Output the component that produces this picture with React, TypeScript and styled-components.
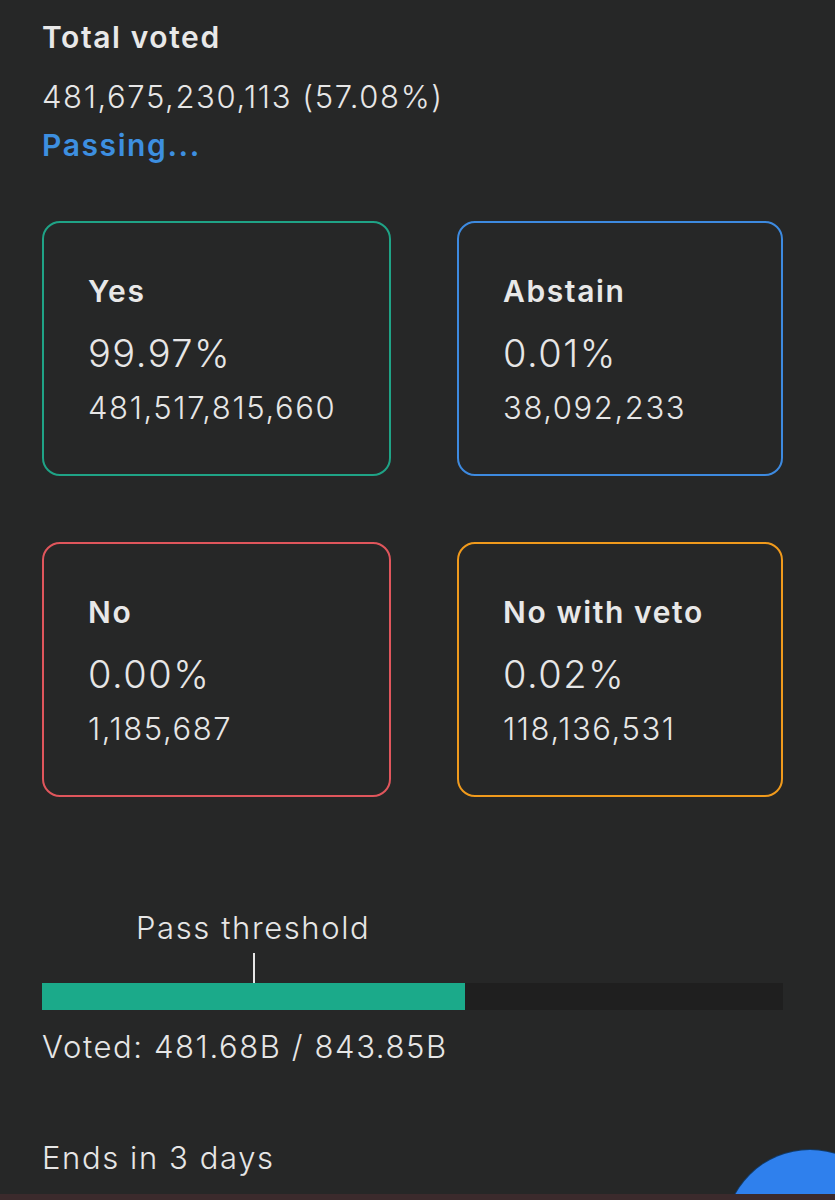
import styled, { createGlobalStyle } from 'styled-components';

const GlobalStyle = createGlobalStyle`
  body {
    margin: 0;
    background: #262727;
    font-family: Inter, Lato, sans-serif;
    color: #e6e6e6;
  }
`;

const Page = styled.div`
  position: relative;
  height: 1200px;
  overflow: hidden;
  display: flex;
  flex-direction: column;
`;

const Content = styled.div`
  flex: 1;
  padding: 19px 52px 0 42px;
`;

const Title = styled.div`
  font-size: 30px;
  font-weight: 600;
  line-height: 36px;
  letter-spacing: 1.6px;
  color: #e8e8e8;
`;

const Body = styled.div`
  font-size: 31px;
  font-weight: 300;
  line-height: 36px;
  letter-spacing: 1.6px;
`;

const Total = styled(Body)`
  margin-top: 24px;
`;

const Status = styled(Title)`
  margin-top: 12px;
  color: #3d8fe0;
`;

const Grid = styled.div`
  margin-top: 58px;
  display: grid;
  grid-template-columns: 349px 326px;
  column-gap: 66px;
  row-gap: 66px;
`;

const Card = styled.div<{ $color: string }>`
  height: 255px;
  box-sizing: border-box;
  border: 2.5px solid ${(p) => p.$color};
  border-radius: 18px;
  padding: 50px 10px 0 44px;
`;

const CardLabel = styled(Title)``;

const CardPercent = styled.div`
  margin-top: 22px;
  font-size: 38px;
  font-weight: 300;
  line-height: 44px;
  letter-spacing: 1.5px;
`;

const CardAmount = styled(Body)`
  margin-top: 15px;
`;

const Threshold = styled.div`
  margin-top: 113px;
`;

const ThresholdLabel = styled(Body)<{ $at: number }>`
  margin-left: ${(p) => p.$at}%;
  transform: translateX(-50%);
  width: max-content;
`;

const Tick = styled.div<{ $at: number }>`
  margin-left: ${(p) => p.$at}%;
  margin-top: 7px;
  width: 2px;
  height: 30px;
  background: #e6e6e6;
`;

const Track = styled.div`
  height: 27px;
  background: #1f1f1f;
`;

const Fill = styled.div`
  height: 100%;
  background: #1baa8a;
`;

const Voted = styled(Body)`
  margin-top: 19px;
`;

const Ends = styled(Body)`
  margin-top: 75px;
`;

const BottomBar = styled.div`
  position: relative;
  z-index: 1;
  height: 6px;
  background: #3b2a2c;
`;

const Fab = styled.div`
  position: absolute;
  right: -60px;
  bottom: -120px;
  width: 170px;
  height: 170px;
  border-radius: 50%;
  background: #2f80ed;
  box-shadow: 0 0 0 1px #123a66;
`;

const options = [
  { label: 'Yes', percent: '99.97%', amount: '481,517,815,660', color: '#1fa386' },
  { label: 'Abstain', percent: '0.01%', amount: '38,092,233', color: '#3d8ae0' },
  { label: 'No', percent: '0.00%', amount: '1,185,687', color: '#e0565c' },
  { label: 'No with veto', percent: '0.02%', amount: '118,136,531', color: '#f09a1c' },
];

const votedShare = 57.08;
const passAt = 28.5;

export default function App() {
  return (
    <>
      <GlobalStyle />
      <Page>
        <Content>
          <Title>Total voted</Title>
          <Total>481,675,230,113 (57.08%)</Total>
          <Status>Passing...</Status>
          <Grid>
            {options.map((o) => (
              <Card key={o.label} $color={o.color}>
                <CardLabel>{o.label}</CardLabel>
                <CardPercent>{o.percent}</CardPercent>
                <CardAmount>{o.amount}</CardAmount>
              </Card>
            ))}
          </Grid>
          <Threshold>
            <ThresholdLabel $at={passAt}>Pass threshold</ThresholdLabel>
            <Tick $at={passAt} />
            <Track>
              <Fill style={{ width: `${votedShare}%` }} />
            </Track>
          </Threshold>
          <Voted>Voted: 481.68B / 843.85B</Voted>
          <Ends>Ends in 3 days</Ends>
        </Content>
        <BottomBar />
        <Fab />
      </Page>
    </>
  );
}
